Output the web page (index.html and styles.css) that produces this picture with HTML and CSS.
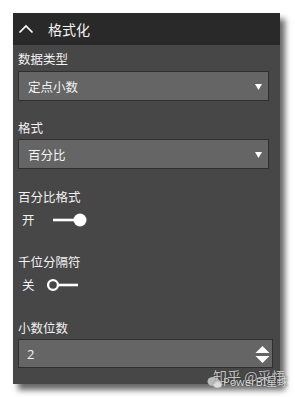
FILE: index.html
```html
<!DOCTYPE html>
<html lang="zh">
<head>
<meta charset="utf-8">
<link rel="stylesheet" href="styles.css">
</head>
<body>
<div class="panel">
  <div class="header">
    <svg class="chev" width="16" height="10" viewBox="0 0 16 10"><polyline points="1.5,8.5 8,2 14.5,8.5" fill="none" stroke="#fff" stroke-width="1.7"/></svg>
    <span class="title">格式化</span>
  </div>
  <div class="body">
    <div class="label l1">数据类型</div>
    <div class="select s1"><span>定点小数</span><svg width="7" height="6" viewBox="0 0 7 6"><polygon points="0,0 7,0 3.5,6" fill="#fff"/></svg></div>
    <div class="label l2">格式</div>
    <div class="select s2"><span>百分比</span><svg width="7" height="6" viewBox="0 0 7 6"><polygon points="0,0 7,0 3.5,6" fill="#fff"/></svg></div>
    <div class="label l3">百分比格式</div>
    <div class="toggle-row">
      <span class="state">开</span>
      <svg width="42" height="14" viewBox="0 0 42 14"><line x1="6" y1="7" x2="31" y2="7" stroke="#fff" stroke-width="2.6"/><circle cx="33" cy="7" r="6.5" fill="#fff"/></svg>
    </div>
    <div class="label l4">千位分隔符</div>
    <div class="toggle-row">
      <span class="state">关</span>
      <svg width="42" height="14" viewBox="0 0 42 14"><circle cx="6" cy="7" r="4.9" fill="none" stroke="#fff" stroke-width="2.3"/><line x1="11" y1="7" x2="31" y2="7" stroke="#fff" stroke-width="2.6"/></svg>
    </div>
    <div class="label l5">小数位数</div>
    <div class="number"><span>2</span><svg width="15" height="19" viewBox="0 0 15 19"><polygon points="0.5,8 14.5,8 7.5,1" fill="#fff"/><polygon points="0.5,11 14.5,11 7.5,18" fill="#fff"/></svg></div>
  </div>
</div>
<div class="watermark">
  <svg class="wx" width="16" height="13" viewBox="0 0 16 13"><ellipse cx="6" cy="5.5" rx="5.5" ry="4.6" fill="#bbb"/><ellipse cx="10.5" cy="8.3" rx="4.6" ry="3.8" fill="#ddd" stroke="#999" stroke-width="0.6"/></svg>
  <span class="wm1">知乎 @采悟</span>
  <span class="wm2">PowerBI星球</span>
</div>
</body>
</html>
```
FILE: styles.css
```css
html, body {
  margin: 0;
  padding: 0;
  background: #ffffff;
}
body {
  width: 295px;
  height: 397px;
  overflow: hidden;
  position: relative;
  font-family: "Noto Sans CJK SC", "Noto Sans", sans-serif;
  color: #f2f2f2;
}
.panel {
  margin: 13px 0 0 13px;
  width: 267px;
  height: 371px;
  background: #474747;
  box-shadow: 5px 6px 6px rgba(0, 0, 0, 0.6);
  display: flex;
  flex-direction: column;
}
.header {
  height: 32px;
  background: #292929;
  display: flex;
  align-items: center;
  padding-left: 5px;
}
.chev {
  display: block;
  margin-top: -1px;
}
.title {
  margin-left: 14px;
  font-size: 14px;
  line-height: 16px;
  color: #f4f4f4;
}
.body {
  display: flex;
  flex-direction: column;
  padding: 0 0 0 5px;
}
.label {
  font-size: 12.5px;
  line-height: 16px;
  height: 16px;
  color: #f2f2f2;
}
.l1 { margin-top: 6px; }
.l2 { margin-top: 19px; }
.l3 { margin-top: 20px; }
.l4 { margin-top: 24px; }
.l5 { margin-top: 25px; }
.select {
  box-sizing: border-box;
  width: 251px;
  height: 30px;
  background: #656565;
  border: 1px solid #2f2f2f;
  display: flex;
  align-items: center;
  justify-content: space-between;
  padding: 0 6px 0 9px;
  font-size: 12.5px;
  color: #f4f4f4;
}
.select svg { display: block; margin-top: 1px; }
.s1 { margin-top: 4px; }
.s2 { margin-top: 3px; }
.toggle-row {
  margin-top: 5px;
  height: 20px;
  display: flex;
  align-items: center;
  padding-left: 4px;
}
.state {
  font-size: 12.5px;
  line-height: 16px;
  width: 25px;
}
.toggle-row svg { display: block; }
.number {
  box-sizing: border-box;
  margin-top: 3px;
  width: 255px;
  height: 29px;
  background: #656565;
  border: 1px solid #2f2f2f;
  display: flex;
  align-items: center;
  justify-content: space-between;
  padding: 0 2px 0 8px;
  font-family: "Open Sans", "Noto Sans", sans-serif;
  font-size: 13px;
  color: #f4f4f4;
}
.number svg { display: block; margin-top: 1px; }
.watermark {
  position: absolute;
  left: 206px;
  top: 367px;
  width: 89px;
  height: 26px;
}
.wx {
  position: absolute;
  left: 1px;
  top: 9px;
}
.wm1 {
  position: absolute;
  left: 7px;
  top: 0;
  font-size: 14px;
  line-height: 18px;
  color: rgba(225, 225, 225, 0.85);
  text-shadow: 0 0 1px rgba(0, 0, 0, 0.6);
  white-space: nowrap;
}
.wm2 {
  position: absolute;
  left: 17px;
  top: 8px;
  font-family: "Noto Sans", "Noto Sans CJK SC", sans-serif;
  font-size: 11px;
  line-height: 14px;
  color: rgba(240, 240, 240, 0.9);
  text-shadow: 0 0 1px rgba(0, 0, 0, 0.8);
  white-space: nowrap;
}
```
